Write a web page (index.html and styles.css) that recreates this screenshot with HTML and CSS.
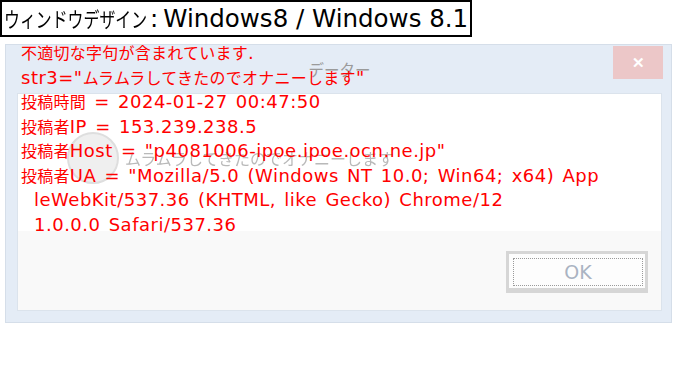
FILE: index.html
```html
<!DOCTYPE html>
<html lang="ja">
<head>
  <meta charset="UTF-8" />
  <title>ウィンドウデザイン</title>
  <link rel="stylesheet" href="styles.css">
</head>
<body>
  <div class="label"><span class="label-ja">ウィンドウデザイン</span><span class="label-colon">:</span>Windows8 / Windows 8.1</div>

  <div class="window">
    <div class="titlebar">
      <span class="caption">データー</span>
      <button class="close" type="button">&#x2715;</button>
    </div>
    <div class="panel">
      <div class="panel-body">
        <div class="ghost">
          <span class="ghost-icon"></span>
          <span class="ghost-text">ムラムラしてきたのでオナニーします</span>
        </div>
        <div class="message">
          <div class="line"><span class="ja">不適切な字句が含まれています</span>.</div>
          <div class="line">str3="<span class="ja">ムラムラしてきたのでオナニーします</span>"</div>
          <div class="line"><span class="ja">投稿時間</span> = 2024-01-27 00:47:50</div>
          <div class="line"><span class="ja">投稿者</span>IP = 153.239.238.5</div>
          <div class="line"><span class="ja">投稿者</span>Host = "p4081006-ipoe.ipoe.ocn.ne.jp"</div>
          <div class="line"><span class="ja">投稿者</span>UA = "Mozilla/5.0 (Windows NT 10.0; Win64; x64) App</div>
          <div class="line indent">leWebKit/537.36 (KHTML, like Gecko) Chrome/12</div>
          <div class="line indent">1.0.0.0 Safari/537.36</div>
        </div>
      </div>
      <div class="panel-footer">
        <button class="ok" type="button"><span class="ok-focus">OK</span></button>
      </div>
    </div>
  </div>
</body>
</html>
```

FILE: styles.css
```css
:root {
  --frame: #e4ecf6;
  --frame-line: #d5dee9;
  --panel-line: #dbe3ec;
  --footer: #f9f9f9;
  --red: #ff0000;
}
body {
  margin: 0;
  background: #fff;
  font-family: 'DejaVu Sans', 'Noto Sans CJK JP', sans-serif;
  color: #000;
}
.label {
  width: max-content;
  border: 2px solid #000;
  padding: 0 2px;
  font-size: 24.5px;
  line-height: 32px;
  white-space: nowrap;
}
.label-ja {
  display: inline-block;
  font-family: 'Noto Sans CJK JP', sans-serif;
  font-size: 21px;
  transform: scaleX(0.757);
  transform-origin: left center;
  margin-right: -46px;
}
.label-colon {
  margin: 0 5px 0 3px;
}
.window {
  box-sizing: border-box;
  width: 667px;
  margin: 7px 0 0 5px;
  background: var(--frame);
  border: 1px solid var(--frame-line);
  padding: 0 9px 11px 11px;
}
.titlebar {
  height: 48px;
  display: grid;
  grid-template-columns: 1fr auto 1fr;
  align-items: center;
}
.caption {
  grid-column: 2;
  font-family: 'Noto Sans CJK JP', sans-serif;
  font-size: 15.5px;
  color: #9a9a9a;
}
.close {
  grid-column: 3;
  justify-self: end;
  align-self: start;
  width: 50px;
  height: 33px;
  margin: 1px -1px 0 0;
  border: none;
  background: #ecc7c8;
  color: #fff;
  font-size: 15px;
  font-weight: bold;
  padding: 0;
}
.panel {
  border: 1px solid var(--panel-line);
}
.panel-body {
  display: flow-root;
  position: relative;
  height: 137px;
  background: #fff;
}
.ghost {
  position: absolute;
  left: 49px;
  top: 38px;
  display: flex;
  align-items: center;
  gap: 6px;
}
.ghost-icon {
  width: 52px;
  height: 52px;
  border-radius: 50%;
  background: #efefef;
  border: 2px solid #dedede;
  box-sizing: border-box;
}
.ghost-text {
  font-family: 'Noto Sans CJK JP', sans-serif;
  font-size: 16px;
  line-height: 1;
  color: #b9b9b9;
  filter: blur(0.3px);
}
.message {
  position: relative;
  z-index: 1;
  margin-top: -53px;
  padding-left: 3px;
  color: var(--red);
  font-size: 18px;
  letter-spacing: 0.5px;
  word-spacing: 2px;
  line-height: 24.5px;
  white-space: nowrap;
}
.message .ja {
  font-family: 'Noto Sans CJK JP', sans-serif;
  font-size: 16px;
  line-height: 16px;
  letter-spacing: 0.25px;
}
.indent {
  padding-left: 13px;
}
.panel-footer {
  height: 79px;
  background: var(--footer);
  display: flex;
  justify-content: flex-end;
  align-items: flex-start;
  padding: 20px 13px 0 0;
  box-sizing: border-box;
}
.ok {
  box-sizing: border-box;
  width: 142px;
  height: 42px;
  padding: 4px 2px 2px 4px;
  background: #fdfdfd;
  border: 3px solid #d6d6d6;
  border-bottom-width: 5px;
  font-family: 'DejaVu Sans', sans-serif;
}
.ok-focus {
  display: flex;
  align-items: center;
  justify-content: center;
  height: 100%;
  border: 1px dotted #9a9a9a;
  box-sizing: border-box;
  color: #aab3c2;
  font-size: 19px;
}
```
